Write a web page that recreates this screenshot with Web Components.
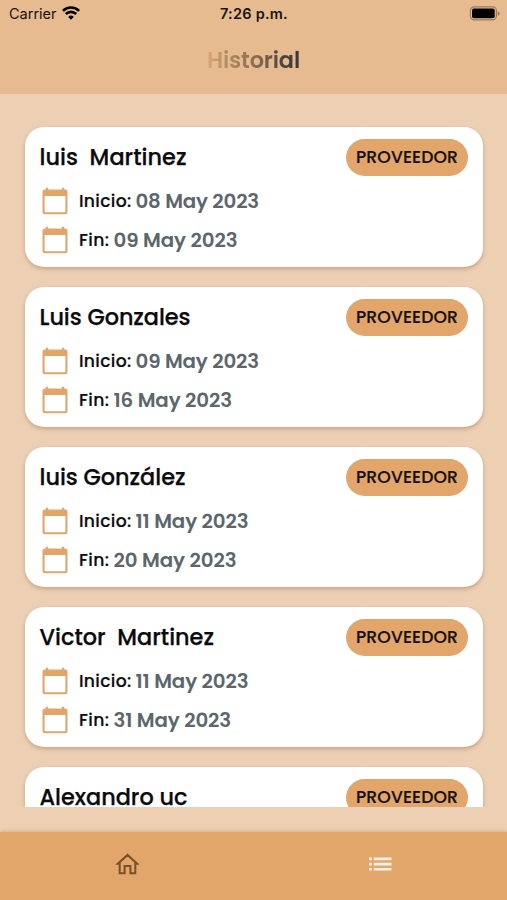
<!DOCTYPE html>
<html lang="es">
<head>
<meta charset="utf-8">
<title>Historial</title>
<style>
  html, body { margin: 0; height: 100%; overflow: hidden; }
  body { font-family: Poppins, Inter, "Open Sans", sans-serif; color: #0b0b0e; }
</style>
</head>
<body>
<history-app></history-app>
<script>
/* One line of text whose tracking is adjusted to fill a given width. */
class FitText extends HTMLElement {
  constructor() {
    super();
    this.attachShadow({ mode: 'open' }).innerHTML = `<style>
        :host { display: block; flex: none; white-space: pre; }
      </style><slot></slot>`;
  }
  connectedCallback() {
    const target = parseFloat(this.getAttribute('width'));
    const count = this.textContent.length;
    this.style.width = 'max-content';
    const natural = this.getBoundingClientRect().width;
    if (count && natural) this.style.letterSpacing = ((target - natural) / count).toFixed(3) + 'px';
    this.style.width = target + 'px';
  }
}

class StatusBar extends HTMLElement {
  constructor() {
    super();
    this.attachShadow({ mode: 'open' }).innerHTML = `
      <style>
        :host { display: grid; grid-template-columns: 1fr auto 1fr; align-items: center; height: 28px; padding: 0 7px 0 9px; box-sizing: border-box; font: 14.5px/18px Inter, sans-serif; color: #17130f; }
        .left { display: flex; align-items: center; gap: 5px; }
        .time { font-weight: 600; margin-right: 1px; }
        svg { display: block; }
        .wifi { margin-top: -3px; }
        .battery { justify-self: end; margin-top: -2px; }
      </style>
      <div class="left"><fit-text width="47.5">Carrier</fit-text>
        <svg class="wifi" width="18" height="14" viewBox="0 0 18 14" fill="none" stroke="#000" stroke-width="2.6">
          <path d="M.9 4.9a11.5 11.5 0 0 1 16.2 0"/><path d="M3.8 8a7.4 7.4 0 0 1 10.4 0"/>
          <path d="M9 13.8 6.2 10.9a4 4 0 0 1 5.6 0z" fill="#000" stroke="none"/>
        </svg></div>
      <fit-text class="time" width="68">7:26 p.m.</fit-text>
      <svg class="battery" width="31" height="15" viewBox="0 0 31 15">
        <rect x="1.4" y=".9" width="26" height="13" rx="3.8" fill="none" stroke="#9b7d5f" stroke-width="1.2"/>
        <rect x="3" y="2.5" width="22.7" height="9.8" rx="2" fill="#000"/>
        <path d="M28.7 5v5q2-1 2-2.5t-2-2.5z" fill="#9b7d5f"/>
      </svg>`;
  }
}

class PageHeader extends HTMLElement {
  constructor() {
    super();
    this.attachShadow({ mode: 'open' }).innerHTML = `
      <style>
        :host { display: flex; flex-direction: column; height: 94px; flex: none; background: #e7bb90; }
        .title { align-self: center; margin-top: 18px; font-size: 22.4px; line-height: 29px; font-weight: 600;
          color: transparent; background: linear-gradient(90deg, #d9a774 0%, #a9845f 28%, #80664d 58%, #4a443f 82%, #38393b 100%);
          -webkit-background-clip: text; background-clip: text; }
      </style>
      <status-bar></status-bar>
      <fit-text class="title" width="93">${this.getAttribute('heading')}</fit-text>`;
  }
}

class CalendarIcon extends HTMLElement {
  constructor() {
    super();
    this.attachShadow({ mode: 'open' }).innerHTML = `
      <style>:host { display: block; flex: none; } svg { display: block; }</style>
      <svg width="26" height="28" viewBox="0 0 26 28">
        <path fill="#e2a66b" fill-rule="evenodd" d="M3.8.8H6.2V2.5H19.8V.8H22.2V2.5H23.2a2.3 2.3 0 0 1 2.3 2.3V24.9A2.3 2.3 0 0 1 23.2 27.2H2.8A2.3 2.3 0 0 1 .5 24.9V4.8A2.3 2.3 0 0 1 2.8 2.5H3.8zM2.6 9V24.4a.8.8 0 0 0 .8.8H22.6a.8.8 0 0 0 .8-.8V9z"/>
      </svg>`;
  }
}

class DateRow extends HTMLElement {
  constructor() {
    super();
    this.attachShadow({ mode: 'open' }).innerHTML = `
      <style>
        :host { display: flex; align-items: center; height: 39px; }
        .label { margin-left: 11px; font-size: 17.2px; font-weight: 500; line-height: 24px; padding-bottom: 1px; color: #0d0d10; -webkit-text-stroke: .2px; }
        .date { margin-left: 4px; font-size: 19.8px; font-weight: 600; line-height: 26px; color: #5c666d; }
      </style>
      <calendar-icon></calendar-icon>
      <fit-text class="label" width="${this.getAttribute('label-width')}">${this.getAttribute('label')}</fit-text>
      <fit-text class="date" width="${this.getAttribute('date-width')}">${this.getAttribute('date')}</fit-text>`;
  }
}

class RoleBadge extends HTMLElement {
  constructor() {
    super();
    this.attachShadow({ mode: 'open' }).innerHTML = `
      <style>
        :host { display: flex; align-items: center; justify-content: center; width: 122px; height: 37.5px; box-sizing: border-box; padding-bottom: 1.5px; border-radius: 19px; background: #e2a66b; font-size: 17.2px; line-height: 24px; font-weight: 500; color: #17100a; -webkit-text-stroke: .2px; }
      </style>
      <fit-text width="102">PROVEEDOR</fit-text>`;
  }
}

class HistoryCard extends HTMLElement {
  constructor() {
    super();
    const a = n => this.getAttribute(n);
    this.attachShadow({ mode: 'open' }).innerHTML = `
      <style>
        :host { display: block; box-sizing: border-box; flex: none; height: 140.5px; padding: 12px 14.5px 0 14.5px; border-radius: 19px; background: #fff; box-shadow: 0 2px 4px rgba(90, 50, 15, .28); }
        .top { display: flex; justify-content: space-between; align-items: center; height: 38px; }
        .name { font-size: 22.4px; line-height: 30px; font-weight: 500; -webkit-text-stroke: .25px; padding-bottom: 1px; }
        .rows { padding: 5px 0 0 2.5px; }
      </style>
      <div class="top"><fit-text class="name" width="${a('name-width')}">${a('name')}</fit-text><role-badge></role-badge></div>
      <div class="rows">
        <date-row label="Inicio:" label-width="52.5" date="${a('start')}" date-width="${a('start-width')}"></date-row>
        <date-row label="Fin:" label-width="30.5" date="${a('end')}" date-width="${a('end-width')}"></date-row>
      </div>`;
  }
}

class HistoryList extends HTMLElement {
  constructor() {
    super();
    this.attachShadow({ mode: 'open' }).innerHTML = `
      <style>
        :host { display: flex; flex-direction: column; gap: 19.5px; box-sizing: border-box; height: 713px; padding: 32.5px 24.5px 0 25px; overflow: hidden; flex: none; }
      </style><slot></slot>`;
  }
}

class TabBar extends HTMLElement {
  constructor() {
    super();
    this.attachShadow({ mode: 'open' }).innerHTML = `
      <style>
        :host { display: grid; grid-template-columns: 1fr 1fr; height: 68.5px; box-sizing: border-box; padding-bottom: 4px; margin-top: auto; background: #e2a66b; box-shadow: 0 -1px 3px rgba(120, 70, 25, .22); align-items: center; justify-items: center; }
        svg { display: block; }
      </style>
      <svg width="24" height="22" viewBox="0 0 24 22" fill="none" stroke="#755029" stroke-width="2">
        <path d="M4.7 10.7H2.8L12.5 1.9 22.2 10.7H20.3V20.3H15.4V13H9.6V20.3H4.7z"/>
      </svg>
      <svg width="24" height="14" viewBox="0 0 24 14" fill="#fcf0e5">
        <path d="M1 .5h2.8v2.7H1zM5.8.5h17.7v2.7H5.8zM1 5.7h2.8v2.7H1zM5.8 5.7h17.7v2.7H5.8zM1 10.9h2.8v2.7H1zM5.8 10.9h17.7v2.7H5.8z"/>
      </svg>`;
  }
}

class HistoryApp extends HTMLElement {
  constructor() {
    super();
    this.attachShadow({ mode: 'open' }).innerHTML = `
      <style>:host { display: flex; flex-direction: column; height: 900px; width: 507px; background: #edd0b4; }</style>
      <page-header heading="Historial"></page-header>
      <history-list>
        <history-card name="luis  Martinez" name-width="147" start="08 May 2023" start-width="123.5" end="09 May 2023" end-width="124"></history-card>
        <history-card name="Luis Gonzales" name-width="151" start="09 May 2023" start-width="123.5" end="16 May 2023" end-width="118.5"></history-card>
        <history-card name="luis González" name-width="146" start="11 May 2023" start-width="113" end="20 May 2023" end-width="123"></history-card>
        <history-card name="Victor  Martinez" name-width="174.5" start="11 May 2023" start-width="113" end="31 May 2023" end-width="117.5"></history-card>
        <history-card name="Alexandro uc" name-width="148" start="12 May 2023" start-width="119" end="31 May 2023" end-width="118"></history-card>
      </history-list>
      <tab-bar></tab-bar>`;
  }
}

customElements.define('fit-text', FitText);
customElements.define('status-bar', StatusBar);
customElements.define('page-header', PageHeader);
customElements.define('calendar-icon', CalendarIcon);
customElements.define('date-row', DateRow);
customElements.define('role-badge', RoleBadge);
customElements.define('history-card', HistoryCard);
customElements.define('history-list', HistoryList);
customElements.define('tab-bar', TabBar);
customElements.define('history-app', HistoryApp);
</script>
</body>
</html>
